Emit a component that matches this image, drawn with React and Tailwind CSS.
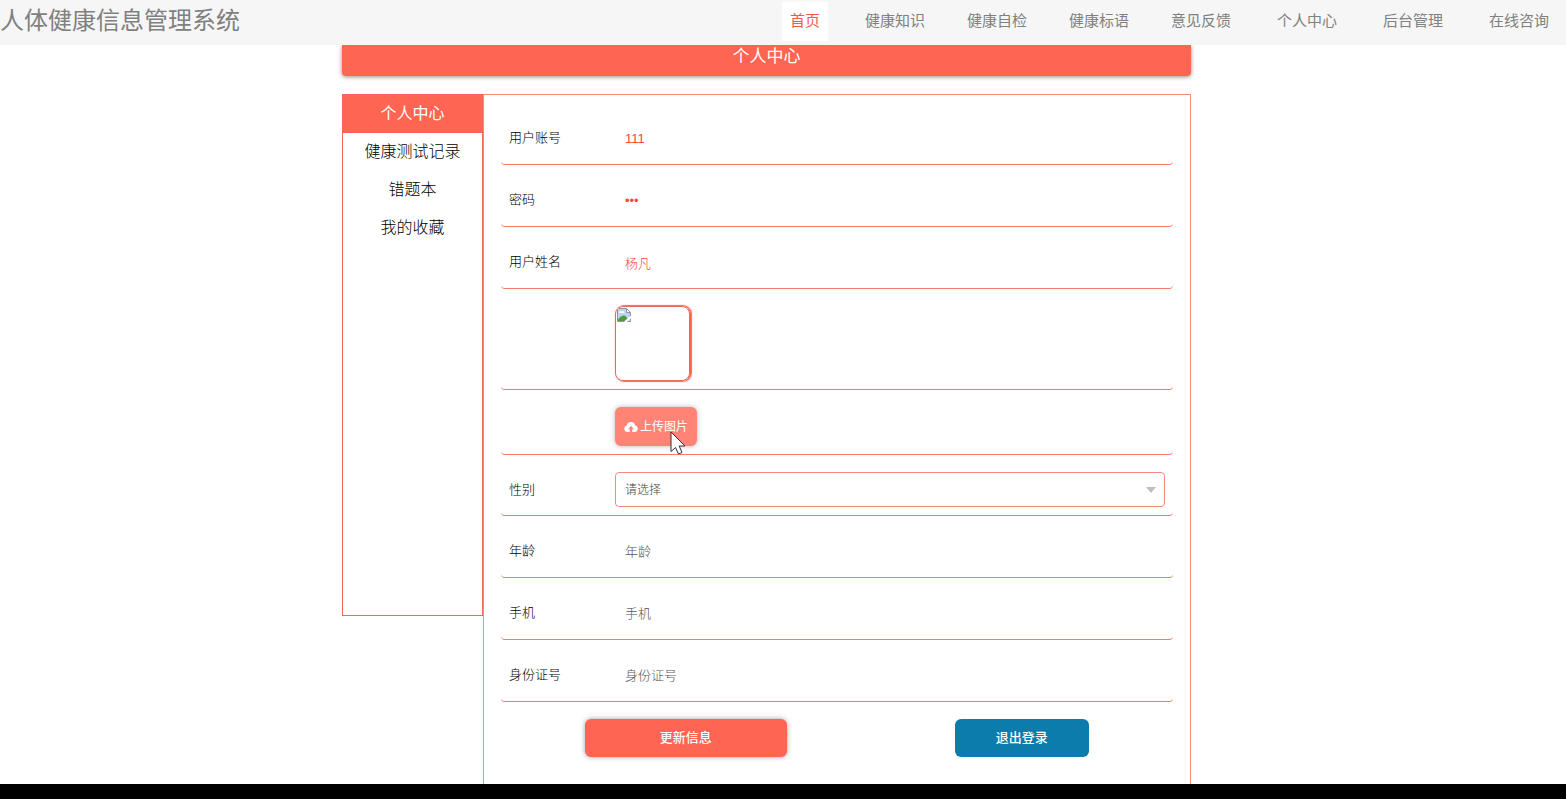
import React from "react";

const firstLinks = ["健康知识", "健康自检", "健康标语", "意见反馈"];
const lastLinks = ["个人中心", "后台管理", "在线咨询"];
const sideItems = ["健康测试记录", "错题本", "我的收藏"];

function NavLink({ children }) {
  return (
    <a href="#" className="flex h-[38px] items-center px-[9px] text-[#808080]">
      {children}
    </a>
  );
}

function Row({ label, htmlFor, children }) {
  return (
    <div className="mt-[17px] flex items-center rounded-b border-b border-[#f4796a] px-2 pb-2 text-[13px]">
      <div className="w-[106px] shrink-0">
        {label && (
          <label htmlFor={htmlFor} className="font-light text-black">
            {label}
          </label>
        )}
      </div>
      <div className="min-w-0 flex-1">{children}</div>
    </div>
  );
}

function TextRow({ label, id, type = "text", value, placeholder }) {
  return (
    <Row label={label} htmlFor={id}>
      <input
        id={id}
        type={type}
        defaultValue={value}
        placeholder={placeholder}
        className="block h-9 w-full bg-transparent px-[10px] font-light text-[#f2493a] outline-none placeholder:text-[#555]"
      />
    </Row>
  );
}

function BrokenImage() {
  return (
    <svg width="16" height="16" viewBox="0 0 16 16" aria-hidden="true">
      <path d="M1.5 1.5H10.5L14.5 5.5V14.5H1.5Z" fill="#bcd3f2" />
      <path d="M3 6a1.6 1.6 0 0 1 2.6-1.500A1.7 1.7 0 0 1 8.500 6Z" fill="#fff" />
      <path d="M2 14V12.5Q5 8.5 8 8.5Q11 9 12 14Z" fill="#4b9b3f" />
      <path d="M1.5 14.5V1.5H10.5L14.5 5.5V14.5Z" fill="none" stroke="#8d949c" />
      <path d="M10.5 1.5V5.5H14.5Z" fill="#fff" stroke="#8d949c" />
      <path d="M9 15L15.500 9.500" stroke="#fff" strokeWidth="2.200" />
    </svg>
  );
}

function UploadCloud() {
  return (
    <svg width="14" height="12" viewBox="0 0 14 12" fill="#fff" aria-hidden="true">
      <path d="M5.8 11H3.5A3.3 3.3 0 0 1 2.7 4.5A4.4 4.4 0 0 1 11.3 4.5A3.3 3.3 0 0 1 10.5 11H8.2V8.3H10L7 5L4 8.3H5.8Z" />
    </svg>
  );
}

export default function App() {
  return (
    <div
      className="flex h-screen flex-col overflow-hidden bg-white text-[#333]"
      style={{ fontFamily: '"Liberation Sans", "Noto Sans CJK SC", sans-serif' }}
    >
      <header className="flex h-[45px] shrink-0 items-start justify-between bg-[#f6f6f6] pr-2">
        <h1 className="text-2xl leading-[42px] text-[#808080]">人体健康信息管理系统</h1>
        <nav className="flex gap-7 pt-0.5 text-[15px]">
          <a href="#" className="flex h-[39px] items-center bg-white px-2 text-[#f2594a]">
            首页
          </a>
          <div className="flex gap-6">
            {firstLinks.map((t) => (
              <NavLink key={t}>{t}</NavLink>
            ))}
          </div>
          {lastLinks.map((t) => (
            <NavLink key={t}>{t}</NavLink>
          ))}
        </nav>
      </header>

      <main className="flex min-h-0 flex-1 justify-center overflow-hidden pr-[33px]">
        <div className="flex w-full max-w-[849px] flex-col">
          <h2 className="h-[31px] shrink-0 rounded-b bg-[#ff6552] text-center text-[17px] leading-[23px] text-white shadow-[0_1px_4px_rgba(70,20,30,0.5)]">
            个人中心
          </h2>
          <div className="mt-[18px] flex min-h-0 flex-1 items-start">
            <aside className="min-h-[522px] w-[141px] shrink-0 border border-[#f2695a] text-center text-base leading-[38px]">
              <a href="#" className="block bg-[#ff6552] text-white">
                个人中心
              </a>
              {sideItems.map((t) => (
                <a key={t} href="#" className="block font-light text-black">
                  {t}
                </a>
              ))}
            </aside>
            <form
              className="min-h-full flex-1 border border-b-0 border-[#f78a7d] px-[17px] pt-2"
              onSubmit={(e) => e.preventDefault()}
            >
              <TextRow label="用户账号" id="account" value="111" />
              <TextRow label="密码" id="password" type="password" value="111" />
              <TextRow label="用户姓名" id="name" value="杨凡" />
              <Row>
                <div
                  role="img"
                  aria-label="头像"
                  className="h-[75px] w-[75px] overflow-hidden rounded-lg border border-[#e8695c] shadow-[1px_0_1px_1px_#ff6552]"
                >
                  <BrokenImage />
                </div>
              </Row>
              <Row>
                <div className="relative flex">
                  <button
                    type="button"
                    className="flex h-[39px] w-[82px] items-center justify-center gap-0.5 rounded-md bg-[#ff8475] text-xs text-white shadow-[0_0_5px_rgba(90,50,90,0.4)]"
                  >
                    <UploadCloud />
                    上传图片
                  </button>
                  <svg
                    className="absolute top-6 left-[55px]"
                    width="18"
                    height="25"
                    viewBox="0 0 18 25"
                    aria-hidden="true"
                  >
                    <path
                      d="M1 1V20.5L5.5 16.5L8.5 23L12 21.5L9.2 15H15Z"
                      fill="#fff"
                      stroke="#333"
                    />
                  </svg>
                </div>
              </Row>
              <Row label="性别" htmlFor="gender">
                <div className="relative">
                  <select
                    id="gender"
                    className="block h-[35px] w-full appearance-none rounded border border-[#f28b7f] bg-white px-[9px] text-xs font-light text-[#444] outline-none"
                  >
                    <option>请选择</option>
                  </select>
                  <svg
                    className="pointer-events-none absolute top-[15px] right-[9px]"
                    width="10"
                    height="6"
                    viewBox="0 0 10 6"
                    aria-hidden="true"
                  >
                    <path d="M0 0H10L5 6Z" fill="#bfbfbf" />
                  </svg>
                </div>
              </Row>
              <TextRow label="年龄" id="age" placeholder="年龄" />
              <TextRow label="手机" id="phone" placeholder="手机" />
              <TextRow label="身份证号" id="idcard" placeholder="身份证号" />
              <div className="mt-[17px] flex justify-around text-[13px] font-medium text-white">
                <button
                  type="submit"
                  className="h-[38px] w-[30%] rounded-md bg-[#ff6552] shadow-[0_0_5px_rgba(70,50,90,0.5)]"
                >
                  更新信息
                </button>
                <button type="button" className="h-[38px] w-[20%] rounded-md bg-[#0c7cac]">
                  退出登录
                </button>
              </div>
            </form>
          </div>
        </div>
      </main>
      <footer className="h-[15px] shrink-0 bg-black" />
    </div>
  );
}
